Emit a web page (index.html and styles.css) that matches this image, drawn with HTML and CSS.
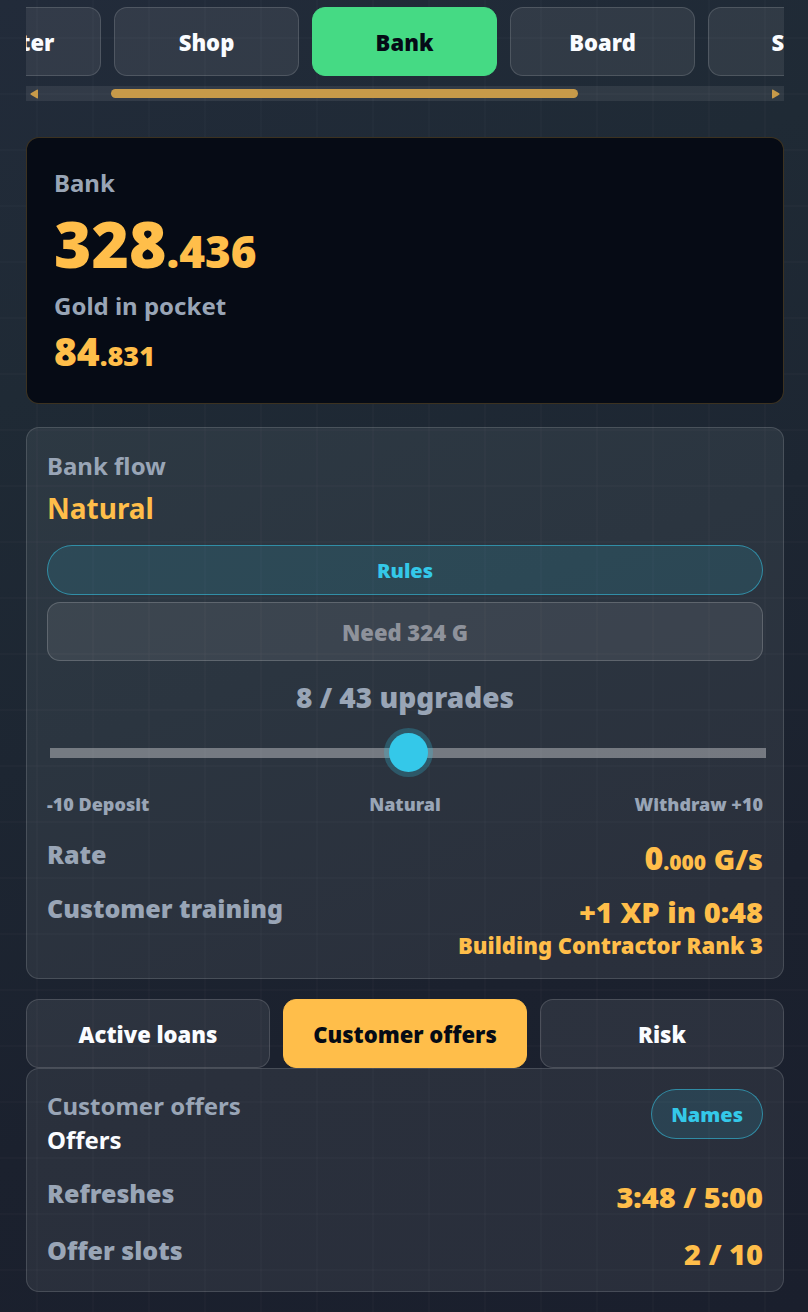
FILE: index.html
```html
<!DOCTYPE html>
<html lang="en">
<head>
  <meta charset="UTF-8">
  <meta name="viewport" content="width=device-width, initial-scale=1.0">
  <title>Bank</title>
  <link rel="stylesheet" href="styles.css">
</head>
<body>
  <main class="app">

    <nav class="main-nav">
      <div class="nav-strip" id="nav-strip">
        <button class="tab" type="button">Counter</button>
        <button class="tab" type="button">Shop</button>
        <button class="tab tab-bank" type="button" id="active-tab">Bank</button>
        <button class="tab" type="button">Board</button>
        <button class="tab" type="button">Stats</button>
        <button class="tab" type="button">More</button>
      </div>
      <div class="scrollbar" aria-hidden="true">
        <svg class="arrow" viewBox="0 0 8 10"><path d="M8 1.2V8.8Q8 10 6.8 9.3L.8 5.8Q0 5 .8 4.2L6.8.7Q8 0 8 1.2Z"/></svg>
        <div class="scroll-track"><div class="scroll-thumb" id="scroll-thumb"></div></div>
        <svg class="arrow" viewBox="0 0 8 10"><path d="M0 1.2V8.8Q0 10 1.2 9.3L7.2 5.8Q8 5 7.2 4.2L1.2.7Q0 0 0 1.2Z"/></svg>
      </div>
    </nav>

    <section class="balance">
      <p class="label">Bank</p>
      <p class="amount-big">328<span class="amount-big-part">.436</span></p>
      <p class="label">Gold in pocket</p>
      <p class="amount">84<span class="amount-part">.831</span></p>
    </section>

    <section class="panel flow">
      <p class="label">Bank flow</p>
      <h2 class="flow-mode">Natural</h2>
      <button class="pill" type="button">Rules</button>
      <button class="upgrade" type="button" disabled>Need 324 G</button>
      <label class="upgrade-count" for="flow-range">8 / 43 upgrades</label>
      <input class="range" id="flow-range" type="range" min="-10" max="10" value="0">
      <div class="range-labels">
        <span>-10 Deposit</span>
        <span>Natural</span>
        <span>Withdraw +10</span>
      </div>
      <dl class="stats">
        <div class="stat">
          <dt>Rate</dt>
          <dd><span class="rate">0</span><span class="rate-part">.000</span> G/s</dd>
        </div>
        <div class="stat">
          <dt>Customer training</dt>
          <dd>+1 XP in 0:48<small>Building Contractor Rank 3</small></dd>
        </div>
      </dl>
    </section>

    <nav class="sub-nav">
      <button class="tab" type="button">Active loans</button>
      <button class="tab tab-offers" type="button">Customer offers</button>
      <button class="tab" type="button">Risk</button>
    </nav>

    <section class="panel offers">
      <header class="offers-head">
        <div>
          <p class="label">Customer offers</p>
          <h2 class="offers-title">Offers</h2>
        </div>
        <button class="pill" type="button">Names</button>
      </header>
      <dl class="stats offer-stats">
        <div class="stat">
          <dt>Refreshes</dt>
          <dd>3:48 / 5:00</dd>
        </div>
        <div class="stat">
          <dt>Offer slots</dt>
          <dd>2 / 10</dd>
        </div>
      </dl>
    </section>

  </main>

  <script>
    const strip = document.getElementById("nav-strip");
    const activeTab = document.getElementById("active-tab");
    const thumb = document.getElementById("scroll-thumb");

    function updateThumb() {
      thumb.style.width = (strip.clientWidth / strip.scrollWidth) * 100 + "%";
      thumb.style.marginLeft = (strip.scrollLeft / strip.scrollWidth) * 100 + "%";
    }

    // keep the active tab in the middle of the strip
    function centerTab() {
      const middle = activeTab.offsetLeft - strip.offsetLeft + activeTab.offsetWidth / 2;
      strip.scrollLeft = middle - strip.clientWidth / 2;
      updateThumb();
    }

    strip.addEventListener("scroll", updateThumb);
    window.addEventListener("resize", centerTab);
    centerTab();
  </script>
</body>
</html>
```
FILE: styles.css
```css
:root {
  --gold: #ffbe4a;
  --cyan: #34c8e9;
  --muted: #99a5b6;
  --ink: #050b16;
  --line: rgba(255, 255, 255, 0.14);
}

* {
  box-sizing: border-box;
}

body {
  margin: 0;
  min-height: 100vh;
  color: #fafcff;
  font-family: "Segoe UI", "Noto Sans", "Open Sans", sans-serif;
  font-weight: 700;
  background:
    linear-gradient(90deg, rgba(255, 255, 255, 0.014) 2px, transparent 2px) 36px 0 / 56px 56px,
    linear-gradient(rgba(255, 255, 255, 0.014) 2px, transparent 2px) 0 37px / 56px 56px,
    linear-gradient(160deg, #222b3a 0%, #1f2a35 25%, #1d2632 48%, #1b212e 72%, #1a1f2d 100%);
}

p, h2, dl, dd {
  margin: 0;
}

button {
  font-family: inherit;
  font-weight: 900;
}

.app {
  padding: 7px 24px 20px 26px;
}

.nav-strip {
  display: flex;
  gap: 13px;
  overflow-x: auto;
  scrollbar-width: none;
}

.tab {
  height: 69px;
  padding: 0;
  border: 1px solid var(--line);
  border-radius: 13px;
  background: rgba(255, 255, 255, 0.08);
  color: #fafcff;
  font-size: 22px;
}

.nav-strip .tab {
  flex: 0 0 185px;
}

.tab-bank {
  background: #45da84;
  border-color: #45da84;
  color: var(--ink);
}

.tab-offers {
  background: var(--gold);
  border-color: var(--gold);
  color: var(--ink);
}

.scrollbar {
  display: flex;
  align-items: center;
  gap: 5px;
  height: 15px;
  margin-top: 10px;
  padding: 0 4px;
  background: rgba(255, 255, 255, 0.08);
}

.arrow {
  width: 8px;
  height: 10px;
  fill: #c79a49;
}

.scroll-track {
  flex: 1;
}

.scroll-thumb {
  height: 9px;
  border-radius: 5px;
  background: #c79a49;
}

.label {
  color: var(--muted);
  font-size: 24px;
  line-height: 34px;
}

.balance {
  margin-top: 36px;
  padding: 28px 27px 22px;
  border: 1px solid rgba(255, 190, 74, 0.22);
  border-radius: 13px;
  background: #060b15;
}

.amount-big,
.amount {
  color: var(--gold);
  font-weight: 900;
}

.amount-big {
  margin-top: 6px;
  font-size: 64px;
  line-height: 75px;
}

.amount-big-part {
  font-size: 44px;
}

.amount {
  margin-top: 3px;
  font-size: 39px;
  line-height: 50px;
}

.amount-part {
  font-size: 27px;
}

.panel {
  padding: 21px 20px 20px;
  border: 1px solid var(--line);
  border-radius: 13px;
  background: rgba(240, 255, 250, 0.07);
}

.flow {
  display: flex;
  flex-direction: column;
  margin-top: 23px;
}

.flow-mode {
  margin-bottom: 12px;
  color: var(--gold);
  font-size: 28px;
  line-height: 50px;
}

.pill {
  height: 50px;
  padding: 0 19px;
  border: 1px solid rgba(52, 200, 233, 0.55);
  border-radius: 25px;
  background: rgba(52, 200, 233, 0.13);
  color: var(--cyan);
  font-size: 20px;
}

.upgrade {
  height: 59px;
  margin-top: 7px;
  border: 1px solid rgba(255, 255, 255, 0.18);
  border-radius: 13px;
  background: rgba(255, 255, 255, 0.08);
  color: #8e929b;
  font-size: 22px;
}

.upgrade-count {
  margin-top: 16px;
  color: var(--muted);
  font-size: 28px;
  font-weight: 900;
  line-height: 40px;
  text-align: center;
}

.range {
  -webkit-appearance: none;
  appearance: none;
  width: 100%;
  height: 39px;
  margin: 16px 3px 0;
  background: transparent;
}

.range::-webkit-slider-runnable-track {
  height: 10px;
  background: rgba(255, 255, 255, 0.35);
}

.range::-webkit-slider-thumb {
  -webkit-appearance: none;
  width: 39px;
  height: 39px;
  margin-top: -15px;
  border-radius: 50%;
  background: var(--cyan);
  box-shadow: 0 0 0 5px rgba(52, 200, 233, 0.25);
}

.range-labels {
  display: grid;
  grid-template-columns: 1fr 1fr 1fr;
  margin-top: 18px;
  color: var(--muted);
  font-size: 18px;
  font-weight: 900;
  line-height: 28px;
}

.range-labels span:nth-child(2) {
  text-align: center;
}

.range-labels span:nth-child(3) {
  text-align: right;
}

.stats {
  display: grid;
  gap: 8px;
  margin-top: 19px;
  font-weight: 900;
}

.flow .stats {
  padding-bottom: 1px;
}

.stat {
  display: flex;
  justify-content: space-between;
}

.stat dt {
  color: var(--muted);
  font-size: 25px;
  line-height: 34px;
}

.stat dd {
  color: var(--gold);
  font-size: 29px;
  line-height: 42px;
  text-align: right;
}

.stat small {
  display: block;
  font-size: 22px;
  line-height: 24px;
}

.rate {
  font-size: 32px;
}

.rate-part {
  font-size: 21px;
}

.sub-nav {
  display: grid;
  grid-template-columns: repeat(3, 1fr);
  gap: 13px;
  margin-top: 20px;
}

.offers {
  padding: 20px 20px 16px;
}

.offers-head {
  display: flex;
  justify-content: space-between;
  align-items: flex-start;
}

.offers-title {
  font-size: 24px;
  line-height: 34px;
}

.offer-stats {
  gap: 15px;
}
```
